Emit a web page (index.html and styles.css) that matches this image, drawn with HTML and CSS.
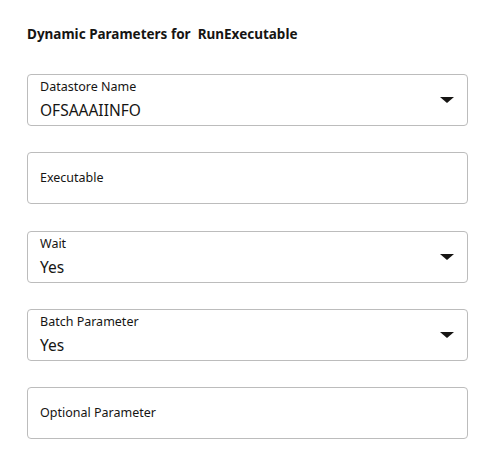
FILE: index.html
```html
<!DOCTYPE html>
<html>
<head>
<meta charset="utf-8">
<link rel="stylesheet" href="styles.css">
</head>
<body>
<div class="panel">
  <h1 class="title">Dynamic Parameters for&nbsp; RunExecutable</h1>
  <div class="fields">
    <div class="field select">
      <div class="content">
        <div class="label">Datastore Name</div>
        <div class="value">OFSAAAIINFO</div>
      </div>
      <span class="arrow"></span>
    </div>
    <div class="field text">
      <div class="placeholder">Executable</div>
    </div>
    <div class="field select">
      <div class="content">
        <div class="label">Wait</div>
        <div class="value">Yes</div>
      </div>
      <span class="arrow"></span>
    </div>
    <div class="field select">
      <div class="content">
        <div class="label">Batch Parameter</div>
        <div class="value">Yes</div>
      </div>
      <span class="arrow"></span>
    </div>
    <div class="field text">
      <div class="placeholder">Optional Parameter</div>
    </div>
  </div>
</div>
</body>
</html>
```
FILE: styles.css
```css
html, body {
  margin: 0;
  padding: 0;
  background: #ffffff;
}
body {
  font-family: "Noto Sans", "Open Sans", "Liberation Sans", sans-serif;
  color: #161513;
}
.panel {
  padding: 24px 0 0 27px;
  width: 441px;
}
.title {
  margin: 0;
  font-size: 13.5px;
  line-height: 20px;
  font-weight: 700;
  color: #161513;
}
.fields {
  margin-top: 30px;
  display: flex;
  flex-direction: column;
  gap: 26.33px;
}
.field {
  box-sizing: border-box;
  height: 52px;
  border: 1px solid #bcbcbc;
  border-radius: 4px;
  display: flex;
  align-items: center;
  padding: 0 13px 0 12px;
}
.content {
  flex: 1;
  display: flex;
  flex-direction: column;
  align-self: flex-start;
  padding-top: 3px;
}
.label {
  font-size: 12.5px;
  line-height: 18px;
  color: #161513;
}
.value {
  font-size: 15.5px;
  line-height: 28px;
  color: #161513;
}
.placeholder {
  font-size: 12.5px;
  line-height: 18px;
  color: #161513;
}
.arrow {
  width: 0;
  height: 0;
  border-left: 7px solid transparent;
  border-right: 7px solid transparent;
  border-top: 6px solid #161513;
}
```
